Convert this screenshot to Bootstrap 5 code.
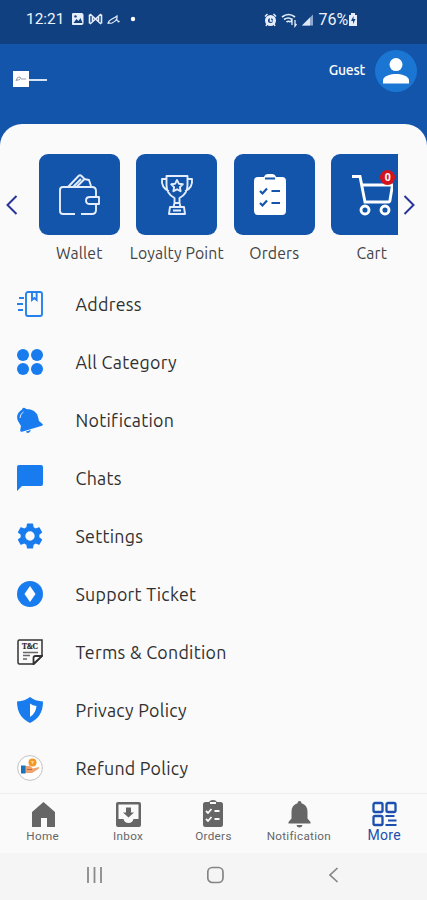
<!DOCTYPE html>
<html lang="en">
<head>
<meta charset="utf-8">
<meta name="viewport" content="width=device-width, initial-scale=1">
<title>More</title>
<link href="https://cdn.jsdelivr.net/npm/bootstrap@5.3.0/dist/css/bootstrap.min.css" rel="stylesheet">
<style>
body{font-family:Ubuntu,"Noto Sans","Open Sans",sans-serif;background:#1455ac;color:#333}
svg{display:block;flex:none}
.phone{width:427px;height:900px}
.status{height:44px;background:#10407f;padding:10px 69px 0 26px;font:400 15.4px Roboto,sans-serif;color:#eef3fb}
.status .pct{font-size:16px;letter-spacing:-.1px}
.topbar{height:80px;padding:0 10px 0 13px}
.guest{font-size:14px;font-weight:500;line-height:18px;margin-top:17px;margin-right:10px;letter-spacing:-.25px}
.avatar{width:42px;height:42px;background:#1a76d2;margin-top:6px}
.brand-box{width:16px;height:16px;margin-top:27px;background:#fff}
.brand-line{width:18px;height:2px;margin-top:35px;background:#d5e2f4}
.sheet{background:#fafafa;border-radius:22px 22px 0 0;min-height:0}
.slider{height:151px;padding-top:30px}
.arrow{width:30.5px;height:101px}
.arrow-next{width:29px}
.slides{width:367px}
.slide-item{width:97.5px;flex:none}
.tile{width:81px;height:81px;border-radius:9px;background:#1455ac}
.tile-name{font-size:15.8px;line-height:20px;margin-top:8px;color:#444;white-space:nowrap;letter-spacing:.15px}
.count{left:49px;top:16px;width:15px;height:15px;background:#d5131b;font:700 10.5px/15px "Open Sans",sans-serif}
.menu-row{height:58px;padding-left:17px;gap:32.5px;font-size:17.8px;line-height:24px;color:#303030;letter-spacing:.28px}
.tabs{height:60px;background:#fafafa;border-top:1px solid #eee;font:400 11.7px/15px Roboto,sans-serif;color:#666;letter-spacing:.3px}
.tab-item{width:20%;padding-top:6px}
.tab-item svg{margin-bottom:1px}
.tab-on{color:#1c4fae;font-size:14px;line-height:12px}
.sysnav{height:47px;background:#f5f5f5;padding:0 88px 4px 86px}
</style>
<script src="https://cdn.jsdelivr.net/npm/bootstrap@5.3.0/dist/js/bootstrap.bundle.min.js"></script>
</head>
<body>
<div class="phone d-flex flex-column overflow-hidden">
  <div class="status d-flex align-items-start justify-content-between flex-shrink-0">
    <div class="d-flex align-items-center">
      <span class="me-2">12:21</span>
      <svg width="66" height="16" viewBox="2 0 66 16" fill="none" stroke="#e6eefb"><rect x="1.500" y="2" width="12" height="12" rx="2" fill="#e6eefb" stroke="none"/><path d="M3.500 12l3-4 2 2 2-3 2 5z" fill="#10407f" stroke="none"/><circle cx="5.500" cy="5.400" r="1.200" fill="#10407f" stroke="none"/><path d="M19.500 3.500v9M31.500 3.500v9M20 3l5.500 5L31 3M20 13l5.500-5L31 13M22.500 5v6M28.500 5v6" stroke-width="1.600"/><path d="M38 13q0-3 4-5t5-3q1 4-5 7-4 1-3-2M45 10q3-2 3 0t1.500 0" stroke-width="1.200"/><circle cx="63" cy="8" r="2.200" fill="#fff" stroke="none"/></svg>
    </div>
    <div class="d-flex align-items-center">
      <svg width="51" height="16" viewBox="0 0 51 16" fill="none" stroke="#e6eefb"><circle cx="6.500" cy="8.500" r="4" stroke-width="3"/><path d="M6.500 6v3h2M1 4.500L3.500 2M9.500 2L12 4.500M3 12l-1 2M10 12l1 2" stroke-width="1.500"/><path d="M18 5q6.500-5 13 0M20 7.500q4.500-3 8 0M22.500 10q2-1.500 4 0" stroke-width="1.700"/><path d="M28 13V8l-1.500 2M31 8v6l1.500-2" stroke-width="1.300"/><path d="M38 13.500h11V2.500z" fill="#8da8cf" stroke="none"/><path d="M38 13.500h8V5.500z" fill="#dce7f7" stroke="none"/></svg>
      <span class="pct ms-1">76%</span>
      <svg width="10" height="15" viewBox="0 0 10 15"><path d="M3 1h4v2h2v11H1V3h2z" fill="#e6eefb"/><path d="M5.500 4L3 9h2v3l2.500-5h-2z" fill="#10407f"/></svg>
    </div>
  </div>
  <div class="topbar d-flex align-items-start flex-shrink-0">
    <div class="brand-box"><svg width="16" height="16" viewBox="0 0 16 16" fill="none" stroke="#8b929c"><path d="M3 10q1-5 4-4 2 1-1 3H3M8 8h5" stroke-width=".9"/></svg></div>
    <div class="brand-line me-auto"></div>
    <div class="guest text-white">Guest</div>
    <div class="avatar rounded-circle d-flex align-items-center justify-content-center">
      <svg width="26" height="26" viewBox="0 0 26 26" fill="#fff"><circle cx="13" cy="6.600" r="6.500"/><path d="M0 25.500v-3.300c0-4.300 8.500-6.200 13-6.200s13 1.900 13 6.200v3.300z"/></svg>
    </div>
  </div>

  <div class="sheet flex-grow-1 overflow-hidden">
    <div class="slider d-flex">
      <div class="arrow d-flex align-items-center ps-1"><svg width="14" height="22" viewBox="0 0 14 22" fill="none" stroke="#27359b" stroke-width="2"><path d="M12.500 2L3.500 11l9 9"/></svg></div>
      <div class="slides d-flex overflow-hidden flex-shrink-0">
        <div class="slide-item d-flex flex-column align-items-center">
          <div class="tile d-flex align-items-center justify-content-center">
            <svg width="42" height="42" viewBox="0 0 42 42" fill="none" stroke="#e4edfb" stroke-width="1.900" stroke-linejoin="round"><path d="M17 40H5q-3 0-3-3V16q0-3 3-3h29q4 0 4 4v5M38 31v5q0 4-4 4H23M32 23h9v7h-9q-4 0-4-3.500t4-3.500z"/><path d="M10 13L20.500 2q1.500-1.500 3 0l3 3-8 8M15 13l8-8M26 5l5 1 2 6"/></svg>
          </div>
          <div class="tile-name">Wallet</div>
        </div>
        <div class="slide-item d-flex flex-column align-items-center">
          <div class="tile d-flex align-items-center justify-content-center">
            <svg width="36" height="42" viewBox="0 0 36 42" fill="none" stroke="#e4edfb" stroke-width="1.900" stroke-linejoin="round"><path d="M7.500 2h21v9q0 9-8 13v5h-5v-5q-8-4-8-13zM7.500 5H3q-1 9 7 12M28.500 5H33q1 9-7 12M15.500 29l-1 4h7l-1-4M11 33h14l1 7H10z"/><path d="M18 6l1.800 3.700 4 .6-2.900 2.900.7 4-3.600-1.900-3.600 1.900.7-4-2.900-2.900 4-.6zM14 36.500h8"/></svg>
          </div>
          <div class="tile-name">Loyalty Point</div>
        </div>
        <div class="slide-item d-flex flex-column align-items-center">
          <div class="tile d-flex align-items-center justify-content-center">
            <svg class="me-2" width="32" height="42" viewBox="0 0 32 42"><path d="M4 3h6q1-3 4-3h4q3 0 4 3h6q4 0 4 4v30q0 4-4 4H4q-4 0-4-4V7q0-4 4-4z" fill="#fff"/><path d="M11 4.500h10M6 17l2.500 2.500L13 14.500M17.500 17H26M6 29l2.500 2.500L13 26.500M17.500 29H26" fill="none" stroke="#1455ac" stroke-width="2.200"/></svg>
          </div>
          <div class="tile-name">Orders</div>
        </div>
        <div class="slide-item d-flex flex-column align-items-center">
          <div class="tile position-relative d-flex align-items-center justify-content-center">
            <svg width="42" height="42" viewBox="0 0 42 42" fill="none" stroke="#fff" stroke-width="2.900"><path d="M1 2.500h8L14 28h23q2 0 2-2l2.500-15H11"/><circle cx="14" cy="36" r="4"/><circle cx="34" cy="36" r="4"/></svg>
            <span class="count position-absolute rounded-circle text-white text-center">0</span>
          </div>
          <div class="tile-name">Cart</div>
        </div>
      </div>
      <div class="arrow arrow-next d-flex align-items-center ps-1"><svg width="14" height="22" viewBox="0 0 14 22" fill="none" stroke="#27359b" stroke-width="2"><path d="M2.500 2l9 9-9 9"/></svg></div>
    </div>

    <div class="menu-row d-flex align-items-center">
      <svg width="26" height="26" viewBox="0 0 26 26" fill="none" stroke="#2581ec" stroke-width="1.900"><rect x="9" y="1" width="16" height="24" rx="2"/><path d="M15 1v8l2.300-2 2.300 2V1M2 7h5M0 13h6M1 19h5"/></svg>
      <span>Address</span></div>
    <div class="menu-row d-flex align-items-center">
      <svg width="26" height="26" viewBox="0 0 26 26" fill="#187bee"><circle cx="6" cy="6" r="6"/><circle cx="20" cy="6" r="6"/><circle cx="6" cy="20" r="6"/><circle cx="20" cy="20" r="6"/></svg>
      <span>All Category</span></div>
    <div class="menu-row d-flex align-items-center">
      <svg width="26" height="26" viewBox="0 0 26 26" fill="#187bee"><path d="M5 2.500Q5.500 0 8 1l1 1q10 0 12 8l1 4 3.500 3q1 1-.5 1.800L5 24.800q-2 .2-1.800-1.500L4 19 1 14Q-2 7 5 2.500zM9 24.500l5-1.400q-1 2.900-3 2.900-1.500 0-2-1.500z"/><path d="M3 11q0-4 3.500-6" fill="none" stroke="#fafafa" stroke-width=".9"/></svg>
      <span>Notification</span></div>
    <div class="menu-row d-flex align-items-center">
      <svg width="26" height="26" viewBox="0 0 26 26" fill="#187bee"><path d="M2 0h22q2 0 2 2v17q0 2-2 2H5l-5 5V2q0-2 2-2z"/></svg>
      <span>Chats</span></div>
    <div class="menu-row d-flex align-items-center">
      <svg width="26" height="26" viewBox="2.200 2 19.600 20" fill="#187bee"><path d="M19.140 12.940c.04-.3.060-.61.060-.94 0-.32-.02-.64-.07-.94l2.030-1.580a.49.49 0 0 0 .12-.61l-1.920-3.320a.488.488 0 0 0-.59-.22l-2.390.96c-.5-.38-1.030-.7-1.620-.94l-.36-2.540a.484.484 0 0 0-.48-.41h-3.840c-.24 0-.43.17-.47.41l-.36 2.540c-.59.24-1.130.57-1.620.94l-2.390-.96c-.22-.08-.47 0-.59.22L2.740 8.870c-.12.21-.08.47.12.61l2.030 1.580c-.05.3-.09.63-.09.94s.02.64.07.94l-2.030 1.580a.49.49 0 0 0-.12.61l1.920 3.320c.12.22.37.29.59.22l2.390-.96c.5.38 1.030.7 1.620.94l.36 2.540c.05.24.24.41.48.41h3.840c.24 0 .44-.17.47-.41l.36-2.540c.59-.24 1.130-.56 1.620-.94l2.390.96c.22.08.47 0 .59-.22l1.920-3.320c.12-.22.07-.47-.12-.61zM12 15.600A3.600 3.600 0 1 1 12 8.400a3.600 3.600 0 0 1 0 7.200z"/></svg>
      <span>Settings</span></div>
    <div class="menu-row d-flex align-items-center">
      <svg width="26" height="26" viewBox="0 0 26 26"><circle cx="13" cy="13" r="13" fill="#187bee"/><path d="M13 5l5.500 8-5.500 8-5.500-8z" fill="#fff"/></svg>
      <span>Support Ticket</span></div>
    <div class="menu-row d-flex align-items-center">
      <svg width="26" height="26" viewBox="0 0 26 26" fill="none" stroke="#333" stroke-width="1.500"><path d="M2.500 1H25v16l-8 8H2.500Q1 25 1 23.500v-21Q1 1 2.500 1z"/><path d="M16.500 25v-6q0-2 2-2H25z" fill="#fff" stroke-width="1.800"/><path d="M6 13.500h15M6 16.500h7M6 20h4" stroke="#666"/><text x="13" y="10.200" text-anchor="middle" letter-spacing="0" textLength="16" font-family="Liberation Serif" font-weight="700" font-size="7.500" fill="#222" stroke="#222" stroke-width=".2">T&amp;C</text></svg>
      <span>Terms &amp; Condition</span></div>
    <div class="menu-row d-flex align-items-center">
      <svg width="26" height="26" viewBox="0 0 26 26"><path d="M13 0q5 4 13 4.500Q26 20 13 26 0 20 0 4.500 8 4 13 0z" fill="#187bee"/><path d="M13 6.500q2.500 2 6.500 2.500-.5 7-6.500 11z" fill="#fff"/></svg>
      <span>Privacy Policy</span></div>
    <div class="menu-row d-flex align-items-center">
      <svg width="26" height="26" viewBox="0 0 26 26"><circle cx="13" cy="13" r="12.400" fill="#fff" stroke="#bbb" stroke-width=".9"/><circle cx="15.500" cy="7.500" r="4" fill="#f49a22"/><path d="M14 6h3l-1.500 3.500z" fill="#fbd29b"/><path d="M8 11h5l3 2.500 6-1.500q1 1-1 2.200L15 18H8z" fill="#f0a16c"/><path d="M10 14.500h5" stroke="#b96d45"/><path d="M4 10.500h4.500v8H4z" fill="#1676bd"/></svg>
      <span>Refund Policy</span></div>
  </div>

  <div class="tabs d-flex flex-shrink-0">
    <div class="tab-item d-flex flex-column align-items-center"><svg width="28" height="28" viewBox="0 0 28 28" fill="#666"><path d="M14.500 2L26 12v15h-8v-9h-6v9H3V12z"/></svg><span>Home</span></div>
    <div class="tab-item d-flex flex-column align-items-center"><svg width="28" height="28" viewBox="0 0 28 28" fill="#666"><path fill-rule="evenodd" d="M4 2h21q2 0 2 2v21q0 2-2 2H4q-2 0-2-2V4q0-2 2-2zm.5 2.500V19h5q1 4 5 4t5-4h5V4.500zM12 7.500h5v5h3l-5.500 5L9 12.500h3z"/></svg><span>Inbox</span></div>
    <div class="tab-item d-flex flex-column align-items-center"><svg width="28" height="28" viewBox="0 0 28 28"><path d="M6.500 2H10q1-2 4-2t4 2h3.500Q24 2 24 4.500v20q0 2.500-2.500 2.500h-15Q4 27 4 24.500v-20Q4 2 6.500 2z" fill="#666"/><path d="M11 3h6M7 11l2 2 3.500-4M15.500 11h5M7 19l2 2 3.500-4M15.500 19h5" fill="none" stroke="#fafafa" stroke-width="1.800"/></svg><span>Orders</span></div>
    <div class="tab-item d-flex flex-column align-items-center"><svg width="28" height="28" viewBox="0 0 28 28" fill="#666"><path d="M14.500 1q2 0 2 2.300 6 1.700 6 8.700v6.500l3 3.500v1.500h-22V22l3-3.500V12q0-7 6-8.700 0-2.300 2-2.300zM11.500 25h6q-.5 2.500-3 2.500t-3-2.500z"/></svg><span>Notification</span></div>
    <div class="tab-item tab-on d-flex flex-column align-items-center"><svg width="28" height="28" viewBox="0 0 28 28" fill="none" stroke="#1c4fae" stroke-width="2.300"><rect x="3.500" y="3" width="9" height="9" rx="1.500"/><rect x="16.500" y="3" width="9" height="9" rx="1.500"/><rect x="3.500" y="16" width="9" height="9" rx="1.500"/><path d="M15.500 16h9M18 20.500h8.500M15.500 25h11" stroke-width="2"/></svg><span>More</span></div>
  </div>
  <div class="sysnav d-flex align-items-center justify-content-between flex-shrink-0">
    <svg width="17" height="16" viewBox="0 0 17 16" stroke="#8a8a8a" stroke-width="1.800"><path d="M2 0v16M8.500 0v16M15 0v16"/></svg>
    <svg width="18" height="18" viewBox="2 0 18 18" fill="none" stroke="#858585" stroke-width="1.700"><rect x="2.800" y="1.500" width="15.200" height="15" rx="4.500"/></svg>
    <svg width="11" height="16" viewBox="0 0 11 16" fill="none" stroke="#858585" stroke-width="1.700"><path d="M9.500 1L2 8l7.500 7"/></svg>
  </div>
</div>
</body>
</html>
